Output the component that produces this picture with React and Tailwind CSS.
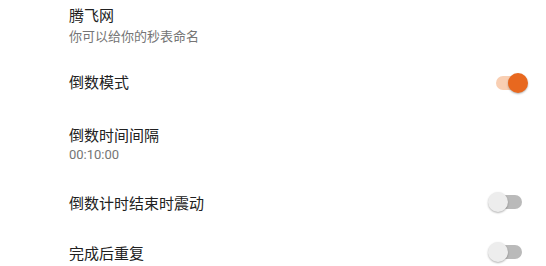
import React from "react";

function Toggle({ on }) {
  return (
    <div className="relative w-[40px] h-[20px] shrink-0">
      <div
        className={`absolute left-[8px] top-[3px] w-[26px] h-[14px] rounded-full ${
          on ? "bg-[#f9cfb3]" : "bg-[#bababa]"
        }`}
      />
      <div
        className={`absolute top-0 w-[20px] h-[20px] rounded-full shadow-[0_1px_2px_rgba(0,0,0,0.3)] ${
          on ? "left-[20px] bg-[#e8681f]" : "left-0 bg-[#ededed]"
        }`}
      />
    </div>
  );
}

const font = { fontFamily: '"Noto Sans CJK SC", "Noto Sans", sans-serif' };

export default function App() {
  return (
    <div
      className="w-[546px] h-[266px] overflow-hidden bg-white flex flex-col"
      style={font}
    >
      <div className="h-[58px] shrink-0 pl-[69px] pt-[5px] flex flex-col">
        <div className="text-[15px] leading-[20px] text-[#212121]">腾飞网</div>
        <div className="text-[13px] leading-[20px] mt-[1px] text-[#757575]">
          你可以给你的秒表命名
        </div>
      </div>
      <div className="h-[50px] shrink-0 pl-[69px] pr-[18px] flex items-center justify-between">
        <div className="text-[15px] leading-[20px] text-[#212121] -mt-[3px]">倒数模式</div>
        <Toggle on />
      </div>
      <div className="h-[70px] shrink-0 pl-[69px] pt-[17px] flex flex-col">
        <div className="text-[15px] leading-[20px] text-[#212121]">倒数时间间隔</div>
        <div
          className="text-[13px] leading-[20px] text-[#757575]"
          style={{ fontFamily: 'Roboto, "Noto Sans CJK SC", sans-serif' }}
        >
          00:10:00
        </div>
      </div>
      <div className="h-[50px] shrink-0 pl-[69px] pr-[18px] flex items-center justify-between">
        <div className="text-[15px] leading-[20px] text-[#212121]">倒数计时结束时震动</div>
        <div className="-mt-[2px]">
          <Toggle />
        </div>
      </div>
      <div className="h-[50px] shrink-0 pl-[69px] pr-[18px] flex items-center justify-between">
        <div className="text-[15px] leading-[20px] text-[#212121]">完成后重复</div>
        <div className="-mt-[2px]">
          <Toggle />
        </div>
      </div>
    </div>
  );
}
